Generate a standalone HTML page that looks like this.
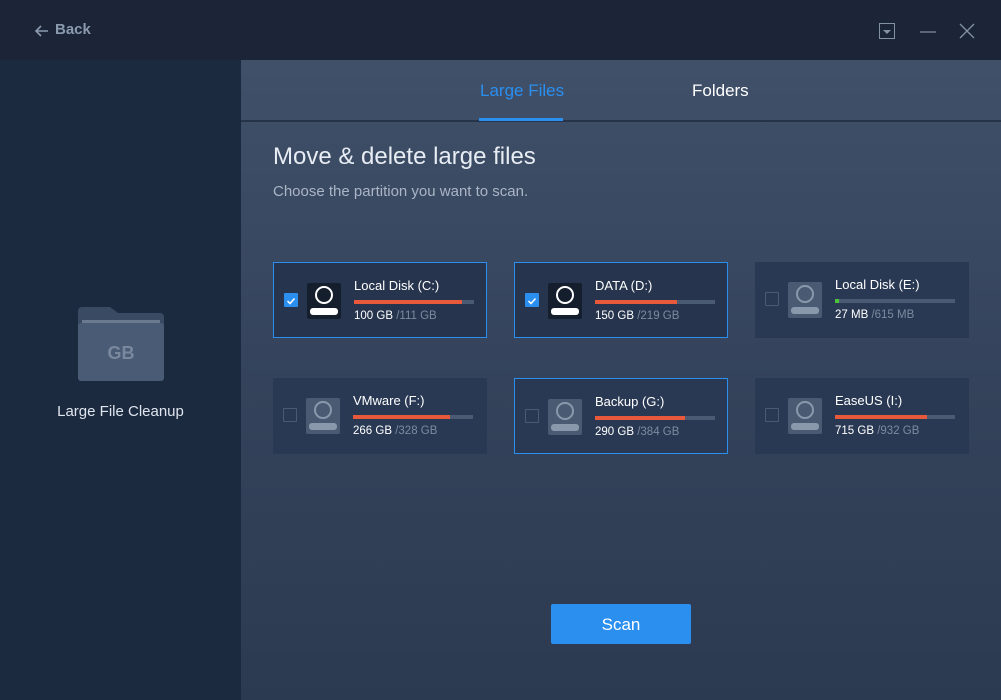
<!DOCTYPE html><html><head><meta charset="utf-8"><style>
*{margin:0;padding:0;box-sizing:border-box}
body{width:1001px;height:700px;overflow:hidden;background:#1b2537;font-family:"Segoe UI","Liberation Sans",sans-serif;position:relative}
.a{position:absolute}
#top{left:0;top:0;width:1001px;height:60px;background:#1b2537}
#left{left:0;top:60px;width:241px;height:640px;background:#1c2a3f}
#main{left:241px;top:60px;width:760px;height:640px;background:linear-gradient(#405069,#34435b 50%,#2c3a51)}
.card{position:absolute;width:214px;height:76px;background:#2a3953}
.card.sel{background:#26344d;border:1px solid #2b8ff0}
.cb{position:absolute;left:10px;top:30px;width:14px;height:14px;border:1px solid #4a5a72;border-radius:1px}
.sel .cb{background:#2b8ff0;border-color:#2b8ff0}
.ic{position:absolute;left:33px;top:20px;width:34px;height:36px;border-radius:2px;background:#4a5a72}
.sel .ic{background:#141e2d}
.ic i{position:absolute;left:8px;top:3px;width:18px;height:18px;border:2px solid #8a98ac;border-radius:50%}
.ic b{position:absolute;left:3px;top:25px;width:28px;height:7px;border-radius:3px;background:#8a98ac}
.sel .ic i{border-color:#fff}.sel .ic b{background:#fff}
.nm{position:absolute;left:80px;top:15px;color:#fff;font-size:13px}
.bar{position:absolute;left:80px;top:37px;width:120px;height:4px;background:#4a5a72}
.bar s{display:block;height:4px;background:#e8583a}
.sz{position:absolute;left:80px;top:47px;font-size:11.5px;color:#fff}
.sz span{color:#7d8ba0}
</style></head><body>
<div id="top" class="a"></div>
<svg class="a" style="left:33px;top:23px" width="18" height="16"><path d="M15 8H3M8 3L3 8l5 5" fill="none" stroke="#8c9ab0" stroke-width="1.6"/></svg>
<div class="a" style="left:55px;top:21px;color:#8c9ab0;font-size:15px;font-weight:bold">Back</div>
<svg class="a" style="left:876px;top:20px" width="110" height="22"><rect x="3.5" y="3.5" width="15" height="15" fill="none" stroke="#8391a6"/><path d="M7 10h8l-4 4z" fill="#8391a6"/><path d="M44 12h16" stroke="#8391a6" stroke-width="1.2"/><path d="M84 4l14 14M98 4L84 18" stroke="#8391a6" stroke-width="1.3"/></svg>
<div id="left" class="a"></div>
<svg class="a" style="left:78px;top:307px" width="86" height="74"><path d="M4 0h28l8 6h42a4 4 0 0 1 4 4v60a4 4 0 0 1-4 4H4a4 4 0 0 1-4-4V4a4 4 0 0 1 4-4z" fill="#3a4a62"/><rect x="4" y="13" width="78" height="4" fill="#6c7a90"/><rect x="0" y="16" width="86" height="58" rx="3" fill="#4a5b75"/><text x="43" y="52" text-anchor="middle" font-family="Liberation Sans,sans-serif" font-weight="bold" font-size="18" fill="#7a889e">GB</text></svg>
<div class="a" style="left:0;width:241px;top:403px;text-align:center;color:#dfe5ee;font-size:15px">Large File Cleanup</div>
<div id="main" class="a"></div>
<div class="a" style="left:241px;top:120px;width:760px;height:2px;background:#263349"></div>
<div class="a" style="left:480px;top:81px;color:#2b8ff0;font-size:17px">Large Files</div>
<div class="a" style="left:479px;top:118px;width:84px;height:3px;background:#2b8ff0"></div>
<div class="a" style="left:692px;top:81px;color:#fff;font-size:17px">Folders</div>
<div class="a" style="left:273px;top:143px;color:#e8edf4;font-size:24px;font-weight:300">Move &amp; delete large files</div>
<div class="a" style="left:273px;top:183px;color:#aab5c5;font-size:15px">Choose the partition you want to scan.</div>

<div class="card sel" style="left:273px;top:262px"><div class="cb"><svg width="12" height="12"><path d="M2.5 6l2.5 2.5 4.5-5" fill="none" stroke="#fff" stroke-width="1.5"/></svg></div><div class="ic"><i></i><b></b></div><div class="nm">Local Disk (C:)</div><div class="bar"><s style="width:90%"></s></div><div class="sz">100 GB <span>/111 GB</span></div></div>
<div class="card sel" style="left:514px;top:262px"><div class="cb"><svg width="12" height="12"><path d="M2.5 6l2.5 2.5 4.5-5" fill="none" stroke="#fff" stroke-width="1.5"/></svg></div><div class="ic"><i></i><b></b></div><div class="nm">DATA (D:)</div><div class="bar"><s style="width:68%"></s></div><div class="sz">150 GB <span>/219 GB</span></div></div>
<div class="card" style="left:755px;top:262px"><div class="cb"></div><div class="ic"><i></i><b></b></div><div class="nm">Local Disk (E:)</div><div class="bar"><s style="width:3%;background:#4ec23a"></s></div><div class="sz">27 MB <span>/615 MB</span></div></div>
<div class="card" style="left:273px;top:378px"><div class="cb"></div><div class="ic"><i></i><b></b></div><div class="nm">VMware (F:)</div><div class="bar"><s style="width:81%"></s></div><div class="sz">266 GB <span>/328 GB</span></div></div>
<div class="card sel" style="left:514px;top:378px;background:#2a3953"><div class="cb" style="background:none;border-color:#4a5a72"></div><div class="ic" style="background:#4a5a72"><i style="border-color:#8a98ac"></i><b style="background:#8a98ac"></b></div><div class="nm">Backup (G:)</div><div class="bar"><s style="width:75%"></s></div><div class="sz">290 GB <span>/384 GB</span></div></div>
<div class="card" style="left:755px;top:378px"><div class="cb"></div><div class="ic"><i></i><b></b></div><div class="nm">EaseUS (I:)</div><div class="bar"><s style="width:77%"></s></div><div class="sz">715 GB <span>/932 GB</span></div></div>

<div class="a" style="left:551px;top:604px;width:140px;height:40px;background:#2b8ff0;border-radius:2px;color:#fff;font-size:17px;text-align:center;line-height:42px">Scan</div>
</body></html>
